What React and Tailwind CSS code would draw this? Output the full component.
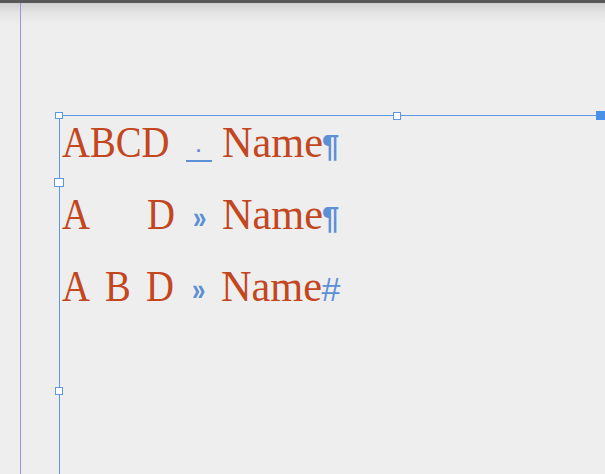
const serif = "font-['Liberation_Serif','Times_New_Roman',serif]";
const sans = "font-['Liberation_Sans',Arial,sans-serif]";

function Word({ w, scale = "scale-x-[0.86]", children }) {
  return (
    <span className={`inline-block shrink-0 ${w}`}>
      <span className={`inline-block whitespace-nowrap origin-left ${scale}`}>{children}</span>
    </span>
  );
}

function Name() {
  return (
    <Word w="w-[100px]" scale="scale-x-[0.94]">
      Name
    </Word>
  );
}

function Arrow() {
  return (
    <span className="inline-block w-[29px] shrink-0">
      <span
        className={`inline-block ${sans} font-bold text-[24px] leading-none text-[#5b8fd6] origin-bottom scale-y-[1.3]`}
      >
        »
      </span>
    </span>
  );
}

function Pilcrow() {
  return <span className={`${sans} font-bold text-[31px] text-[#5b8fd6]`}>¶</span>;
}

function Row({ children }) {
  return <div className="flex items-baseline h-[72px] leading-[72px]">{children}</div>;
}

function Handle({ className }) {
  return <div className={`absolute bg-white border border-[#5b9ae2] ${className}`} />;
}

export default function App() {
  return (
    <div className="w-[605px] h-[474px] bg-[#edeeed] flex flex-col overflow-hidden">
      <div className="h-[3px] bg-[#575757]" />
      <div className="flex-1 flex bg-[linear-gradient(to_bottom,#cfcfcf_0px,#e4e5e4_10px,#edeeed_22px)]">
        <div className="w-[20px]" />
        <div className="w-px bg-[#9892e6]" />
        <div className="w-[38px]" />
        <div className="flex-1 pt-[112px]">
          <div className="relative h-full border-l border-t border-[#5b9ae2] pl-[2px]">
            <Handle className="-left-[5px] -top-[4px] w-[8px] h-[7px]" />
            <Handle className="left-[333px] -top-[4px] w-[8px] h-[8px]" />
            <Handle className="-left-[6px] top-[62px] w-[10px] h-[9px]" />
            <Handle className="-left-[5px] top-[271px] w-[8px] h-[8px]" />
            <div className="absolute left-[536px] -top-[5px] w-[12px] h-[9px] bg-[#4a90e8]" />

            <div className={`-mt-[10px] ${serif} text-[45px] text-[#c3461f]`}>
              <Row>
                <Word w="w-[124px]">ABCD</Word>
                <span className="inline-block w-[36px] shrink-0">
                  <span
                    className={`inline-block w-[26px] ${sans} font-bold text-[18px] leading-[16px] pb-[1px] text-center text-[#5b8fd6] border-b-2 border-[#5b8fd6]`}
                  >
                    ·
                  </span>
                </span>
                <Name />
                <Pilcrow />
              </Row>
              <Row>
                <Word w="w-[85px]">A</Word>
                <Word w="w-[46px]">D</Word>
                <Arrow />
                <Name />
                <Pilcrow />
              </Row>
              <Row>
                <Word w="w-[43px]">A</Word>
                <Word w="w-[41px]">B</Word>
                <Word w="w-[46px]">D</Word>
                <Arrow />
                <Name />
                <span className={`${sans} italic text-[34px] text-[#5b8fd6]`}>#</span>
              </Row>
            </div>
          </div>
        </div>
      </div>
    </div>
  );
}
